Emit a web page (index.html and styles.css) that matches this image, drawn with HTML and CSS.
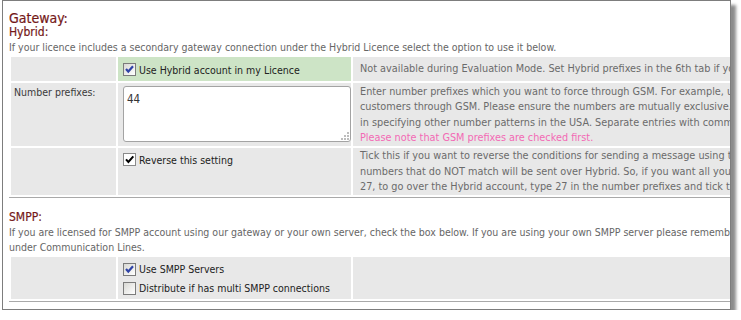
FILE: index.html
```html
<!DOCTYPE html>
<html lang="en">
<head>
  <meta charset="UTF-8">
  <meta name="viewport" content="width=device-width, initial-scale=1.0">
  <title>Gateway settings</title>
  <link rel="stylesheet" href="styles.css">
</head>
<body>
  <div class="frame">
    <h1 class="title">Gateway:</h1>
    <h2 class="subtitle">Hybrid:</h2>
    <p class="intro">If your licence includes a secondary gateway connection under the Hybrid Licence select the option to use it below.</p>
    <table class="settings">
      <colgroup>
        <col class="col-label">
        <col class="col-control">
        <col>
      </colgroup>
      <tr>
        <td class="label"></td>
        <td class="control active">
          <label class="check">
            <span class="box xp"><svg width="11" height="11" viewBox="0 0 11 11"><path d="M2 5 L4.3 7.5 L9 2.3" fill="none" stroke="#2f43a6" stroke-width="2.2"/></svg></span>
            Use Hybrid account in my Licence
          </label>
        </td>
        <td class="desc">Not available during Evaluation Mode. Set Hybrid prefixes in the 6th tab if you wish to use them.</td>
      </tr>
      <tr>
        <td class="label">Number prefixes:</td>
        <td class="control">
          <div class="prefix-box">
            <textarea class="prefixes">44</textarea>
            <svg class="grip" width="9" height="9" viewBox="0 0 9 9">
              <rect x="7" y="1" width="2" height="2" fill="#bdbdbd"/>
              <rect x="4" y="4" width="2" height="2" fill="#bdbdbd"/>
              <rect x="7" y="4" width="2" height="2" fill="#bdbdbd"/>
              <rect x="1" y="7" width="2" height="2" fill="#bdbdbd"/>
              <rect x="4" y="7" width="2" height="2" fill="#bdbdbd"/>
              <rect x="7" y="7" width="2" height="2" fill="#bdbdbd"/>
            </svg>
          </div>
        </td>
        <td class="desc">Enter number prefixes which you want to force through GSM. For example, use 44 to send all your UK<br>customers through GSM. Please ensure the numbers are mutually exclusive. If you use 1 for the USA avoid<br>in specifying other number patterns in the USA. Separate entries with commas.<br><span class="note">Please note that GSM prefixes are checked first.</span></td>
      </tr>
      <tr>
        <td class="label"></td>
        <td class="control">
          <label class="check">
            <span class="box classic"><svg width="11" height="11" viewBox="0 0 11 11"><path d="M2 5.3 L4.4 8 L9.3 2.3" fill="none" stroke="#000" stroke-width="2"/></svg></span>
            Reverse this setting
          </label>
        </td>
        <td class="desc">Tick this if you want to reverse the conditions for sending a message using the Hybrid account, so that<br>numbers that do NOT match will be sent over Hybrid. So, if you want all your messages except those to<br>27, to go over the Hybrid account, type 27 in the number prefixes and tick this box.</td>
      </tr>
    </table>

    <h2 class="subtitle smpp">SMPP:</h2>
    <p class="intro">If you are licensed for SMPP account using our gateway or your own server, check the box below. If you are using your own SMPP server please remember to set it up<br>under Communication Lines.</p>
    <table class="settings">
      <colgroup>
        <col class="col-label">
        <col class="col-control">
        <col>
      </colgroup>
      <tr>
        <td class="label"></td>
        <td class="control list">
          <label class="check">
            <span class="box xp"><svg width="11" height="11" viewBox="0 0 11 11"><path d="M2 5 L4.3 7.5 L9 2.3" fill="none" stroke="#2f43a6" stroke-width="2.2"/></svg></span>
            Use SMPP Servers
          </label>
          <label class="check">
            <span class="box xp"></span>
            Distribute if has multi SMPP connections
          </label>
        </td>
        <td class="desc"></td>
      </tr>
    </table>
  </div>
</body>
</html>
```

FILE: styles.css
```css
body {
  margin: 0;
  background-color: white;
  font-family: "DejaVu Sans Condensed", "Liberation Sans", sans-serif;
  font-size: 10.5px;
}
.frame {
  box-sizing: border-box;
  width: 729px;
  height: 310px;
  margin-left: 2px;
  padding: 10px 0 0 6px;
  border: 1px solid #7d7d7d;
  box-shadow: 5px 5px 3px rgba(0, 0, 0, 0.45);
  overflow: hidden;
  background-color: white;
}
.title {
  margin: 0;
  font-size: 14px;
  font-weight: normal;
  line-height: 14px;
  color: #741818;
  -webkit-text-stroke: 0.2px #741818;
}
.subtitle {
  margin: 0;
  font-size: 12px;
  font-weight: normal;
  line-height: 15px;
  color: #741818;
  -webkit-text-stroke: 0.2px #741818;
}
.subtitle.smpp {
  margin-top: 12px;
}
.intro {
  margin: 0;
  font-size: 10.5px;
  line-height: 15px;
  color: #666;
  white-space: nowrap;
}
.settings {
  table-layout: fixed;
  width: 1000px;
  border-spacing: 2px;
  border-bottom: 1px solid #a9a9a9;
}
.col-label {
  width: 105px;
}
.col-control {
  width: 233px;
}
.settings td {
  background-color: #e8e8e8;
  vertical-align: top;
}
.label {
  padding: 2px 4px 2px 3px;
  line-height: 15.5px;
  color: #3a3a3a;
  white-space: nowrap;
}
.control {
  padding: 2px 5px 4px 5px;
}
.control.active {
  background-color: #cde4c6;
  padding: 3px 5px 2px 5px;
}
.control.list {
  padding: 3px 5px 1px 5px;
}
.settings td.desc {
  vertical-align: middle;
  padding: 0 6px 0 7px;
  font-size: 10.8px;
  line-height: 15.5px;
  color: #6b6b6b;
  white-space: nowrap;
}
.note {
  color: #f36ab5;
}
.check {
  display: flex;
  align-items: center;
  gap: 3px;
  height: 19px;
  color: #222;
  white-space: nowrap;
}
.box {
  display: inline-block;
  flex: none;
  width: 11px;
  height: 11px;
  border: 1px solid #7b7b7b;
  background: linear-gradient(135deg, #d8d8d4, #ffffff);
}
.box svg {
  display: block;
}
.box.classic {
  background: white;
  border-color: #8a8a8a;
}
.prefix-box {
  position: relative;
  width: 228px;
  margin-top: 1px;
}
.prefixes {
  display: block;
  box-sizing: border-box;
  width: 228px;
  height: 56px;
  margin: 0;
  padding: 5px 3px;
  border: 1px solid #a3a3a3;
  border-radius: 3px;
  resize: none;
  font-family: "DejaVu Sans Condensed", "Liberation Sans", sans-serif;
  font-size: 11.5px;
  line-height: 15px;
  color: #333;
  background-color: white;
}
.grip {
  position: absolute;
  right: 2px;
  bottom: 2px;
}
```
